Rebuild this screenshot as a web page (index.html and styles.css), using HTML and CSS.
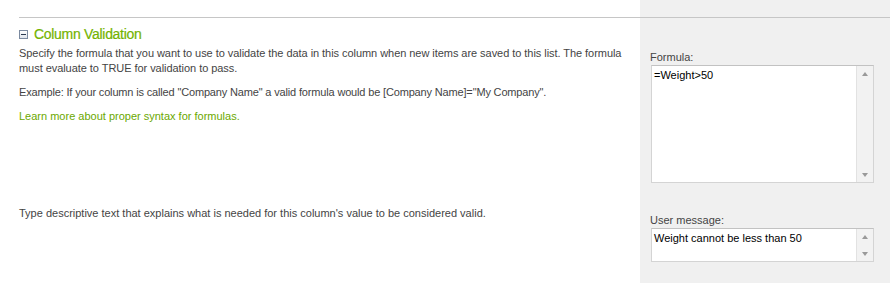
FILE: index.html
```html
<!DOCTYPE html>
<html>
<head>
<meta charset="utf-8">
<link rel="stylesheet" href="styles.css">
</head>
<body>
<div class="page">
  <div class="main">
    <div class="section">
      <div class="heading">
        <span class="toggle"><span class="minus"></span></span>
        <span class="title">Column Validation</span>
      </div>
      <p class="desc">Specify the formula that you want to use to validate the data in this column when new items are saved to this list. The formula must evaluate to TRUE for validation to pass.</p>
      <p class="example">Example: If your column is called "Company Name" a valid formula would be [Company Name]="My Company".</p>
      <a class="link" href="#">Learn more about proper syntax for formulas.</a>
      <p class="desc2">Type descriptive text that explains what is needed for this column's value to be considered valid.</p>
    </div>
  </div>
  <div class="side">
    <div class="side-inner">
      <div class="label label-formula">Formula:</div>
      <div class="box box-formula">
        <div class="box-text">=Weight&gt;50</div>
        <div class="scroll">
          <span class="arrow up"></span>
          <span class="arrow down"></span>
        </div>
      </div>
      <div class="label label-msg">User message:</div>
      <div class="box box-msg">
        <div class="box-text">Weight cannot be less than 50</div>
        <div class="scroll">
          <span class="arrow up"></span>
          <span class="arrow down"></span>
        </div>
      </div>
    </div>
  </div>
</div>
</body>
</html>
```

FILE: styles.css
```css
html, body {
  margin: 0;
  padding: 0;
  background: #fff;
}
body {
  font-family: "Liberation Sans", Arial, sans-serif;
  font-size: 11px;
  color: #444;
}
.page {
  display: flex;
  width: 890px;
  height: 283px;
}
.main {
  width: 621px;
  padding-left: 19px;
  padding-top: 17px;
}
.section {
  border-top: 1px solid #c6c6c6;
  height: 265px;
}
.heading {
  display: flex;
  align-items: center;
  margin-top: 8px;
  height: 16px;
}
.toggle {
  width: 7px;
  height: 7px;
  border: 1px solid #7b8aa0;
  background: linear-gradient(#ffffff, #dfe4ec);
  margin-left: 0;
  margin-right: 6px;
  display: flex;
  align-items: center;
  justify-content: center;
}
.minus {
  width: 5px;
  height: 1px;
  background: #2b3a50;
}
.title {
  font-size: 14px;
  color: #74b300;
  letter-spacing: -0.3px;
  -webkit-text-stroke: 0.2px #74b300;
}
p {
  margin: 0;
  line-height: 15px;
}
.desc {
  margin-top: 4px;
  letter-spacing: -0.05px;
}
.example {
  margin-top: 9px;
  letter-spacing: -0.16px;
}
.link {
  display: block;
  margin-top: 9px;
  line-height: 15px;
  color: #6ba800;
  text-decoration: none;
}
.desc2 {
  margin-top: 82px;
}
.side {
  width: 250px;
  background: #f0f0f0;
  padding-top: 17px;
}
.side-inner {
  border-top: 1px solid #c6c6c6;
  padding-left: 10px;
}
.label {
  line-height: 14px;
  color: #444;
}
.label-formula {
  margin-top: 32px;
}
.label-msg {
  margin-top: 30px;
}
.box {
  display: flex;
  width: 221px;
  background: #fff;
  border: 1px solid #d4d4d4;
  border-top-color: #c2c2c2;
  margin-left: 1px;
  margin-top: 1px;
}
.box-formula {
  height: 116px;
}
.box-msg {
  height: 32px;
}
.box-text {
  flex: 1;
  padding: 2px 2px;
  font-size: 11px;
  color: #000;
  line-height: 14px;
}
.scroll {
  width: 16px;
  background: #f2f2f2;
  border-left: 1px solid #e2e2e2;
  display: flex;
  flex-direction: column;
  justify-content: space-between;
  align-items: center;
  padding: 6px 0 5px;
}
.arrow {
  width: 0;
  height: 0;
  border-left: 3.5px solid transparent;
  border-right: 3.5px solid transparent;
}
.arrow.up {
  border-bottom: 4px solid #999;
}
.arrow.down {
  border-top: 4px solid #999;
}
```
